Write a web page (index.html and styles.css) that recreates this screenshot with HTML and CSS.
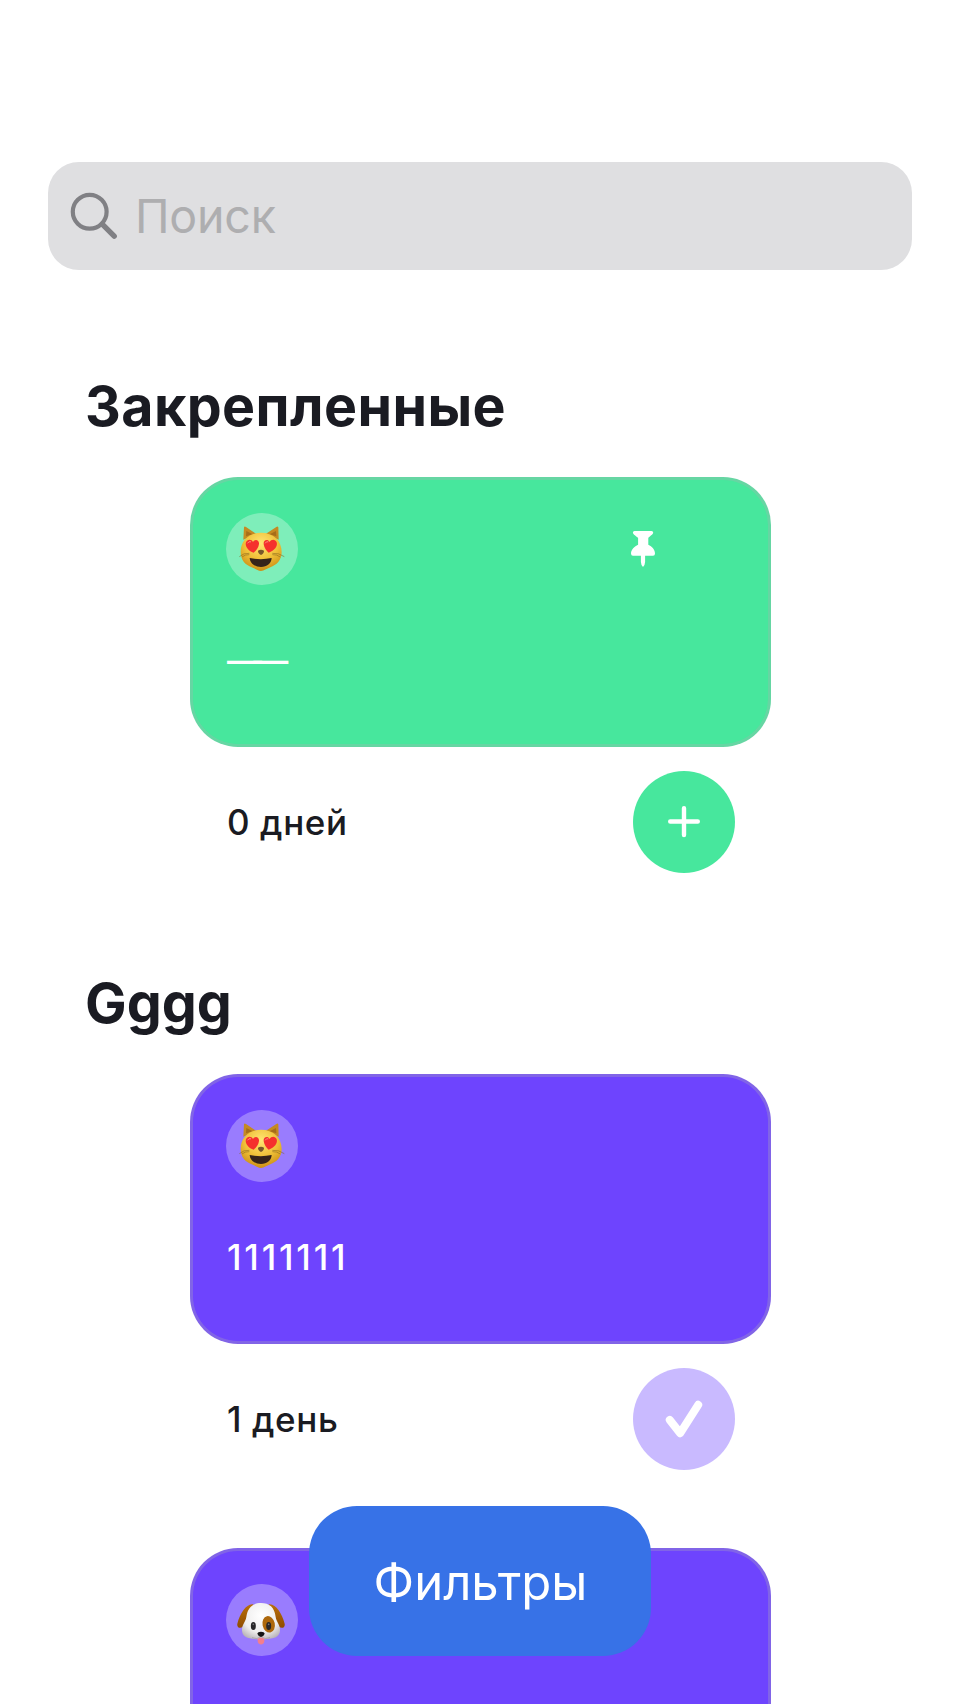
FILE: index.html
```html
<!DOCTYPE html>
<html lang="ru">
<head>
<meta charset="utf-8">
<title>Трекеры</title>
<link rel="stylesheet" href="styles.css">
</head>
<body>
<svg class="defs" aria-hidden="true">
  <defs>
    <radialGradient id="fur" cx="50%" cy="28%" r="75%">
      <stop offset="0" stop-color="#ffe573"/><stop offset=".55" stop-color="#efc038"/><stop offset="1" stop-color="#c98a12"/>
    </radialGradient>
    <radialGradient id="white-fur" cx="50%" cy="35%" r="70%">
      <stop offset="0" stop-color="#ffffff"/><stop offset=".65" stop-color="#efeeee"/><stop offset="1" stop-color="#b9b4b8"/>
    </radialGradient>
    <linearGradient id="ear" x1="0" y1="0" x2="0" y2="1">
      <stop offset="0" stop-color="#b96f0c"/><stop offset="1" stop-color="#8f4c00"/>
    </linearGradient>
    <symbol id="cat" viewBox="0 0 216 216">
      <path d="M52 80 54 43Q55 39 60 42L90 62ZM158 80 157 43Q155 39 151 42L120 62Z" fill="#c58a22"/>
      <path d="M60 70 61 54 80 64ZM151 70 150 54 131 64Z" fill="#a66d1a"/>
      <path d="M105 59C141 59 167 82 167 117C167 142 151 156 133 163C121 167 115 174 105 174C95 174 89 167 77 163C59 156 44 142 44 117C44 82 69 59 105 59Z" fill="url(#fur)"/>
      <path d="M83 119C66 114 56 99 60 88C64 77 77 78 81 87C88 76 100 82 99 93C98 104 90 113 83 119Z" fill="#f5302d"/>
      <path d="M128 119C145 114 156 99 152 88C148 77 135 78 131 87C124 76 112 82 113 93C114 104 121 113 128 119Z" fill="#f5302d"/>
      <path d="M65 90Q68 84 74 86M118 90Q121 84 126 86" fill="none" stroke="#ff8a80" stroke-width="3" stroke-linecap="round"/>
      <path d="M96 113Q105 107 114 113Q114 122 105 126Q96 122 96 113Z" fill="#77572b"/>
      <path d="M71 135Q105 142 137 135C136 151 123 162 105 162C87 162 72 151 71 135Z" fill="#35241a"/>
      <path d="M70 121Q53 119 40 131M70 125Q57 124 48 132M139 121Q158 119 175 131M139 125Q153 124 163 132" fill="none" stroke="#80611f" stroke-width="1.6"/>
    </symbol>
    <symbol id="dog" viewBox="0 0 216 216">
      <path d="M82 61C62 57 42 88 34 119C32 130 41 135 51 128C61 121 76 83 82 61ZM128 61C148 57 168 88 176 119C178 130 169 135 159 128C149 121 134 83 128 61Z" fill="url(#ear)"/>
      <path d="M105 57C130 57 146 70 149 99C151 114 162 120 162 139C162 160 143 166 105 166C67 166 48 160 48 139C48 120 59 114 61 99C65 70 80 57 105 57Z" fill="url(#white-fur)"/>
      <ellipse cx="128" cy="121" rx="18.500" ry="25" transform="rotate(-12 128 121)" fill="#ad680c"/>
      <ellipse cx="82" cy="126" rx="7.500" ry="12" fill="#292729"/>
      <ellipse cx="128" cy="126" rx="7.500" ry="12" fill="#292729"/>
      <circle cx="82" cy="121" r="2.500" fill="#77797c"/><circle cx="128" cy="121" r="2.500" fill="#77797c"/>
      <path d="M78 161Q93 168 105 158Q117 168 132 161" fill="none" stroke="#9d989b" stroke-width="2"/>
      <path d="M95 164Q105 158 115 164V171C115 185 95 185 95 171Z" fill="#f47f8d"/>
      <path d="M94 149Q95 143 105 143Q115 143 116 149Q114 156 105 159Q96 156 94 149Z" fill="#151415"/>
    </symbol>
  </defs>
</svg>

<main class="screen">
  <div class="search">
    <svg class="search-icon" viewBox="0 0 48 48" aria-hidden="true">
      <circle cx="19.700" cy="19.700" r="16.900"/>
      <path d="M32.200 32.200 44.200 44.200"/>
    </svg>
    <span class="search-placeholder">Поиск</span>
  </div>

  <section class="category">
    <h2 class="category-title">Закрепленные</h2>
    <div class="tracker-list">
      <article class="tracker green">
        <div class="card">
          <div class="card-top">
            <span class="emoji"><svg viewBox="0 0 216 216" role="img" aria-label="Кот"><use href="#cat"/></svg></span>
            <svg class="pin" viewBox="0 0 24 36" aria-hidden="true"><path d="M3.500 0H20.500Q22.200 0 22.200 1.600C22.200 3.500 18.500 5.500 17.300 7V13.800C21 15.500 24 18.500 24 22.500Q24 24.800 22 24.800H14.100V31Q14 34 12 36Q10 34 9.900 31V24.800H2Q0 24.800 0 22.500C0 18.500 3.500 15.500 7.100 13.800V7C5.500 5.500 1.900 3.500 1.900 1.600Q1.900 0 3.500 0Z"/></svg>
          </div>
          <p class="card-title dash">——</p>
        </div>
        <div class="tracker-footer">
          <span class="days">0 дней</span>
          <button class="mark" aria-label="Добавить"><svg viewBox="0 0 102 102"><path class="plus" d="M37.200 50.500H64.800M51 37.200V64"/></svg></button>
        </div>
      </article>
    </div>
  </section>

  <section class="category">
    <h2 class="category-title latin">Gggg</h2>
    <div class="tracker-list">
      <article class="tracker violet">
        <div class="card">
          <div class="card-top">
            <span class="emoji"><svg viewBox="0 0 216 216" role="img" aria-label="Кот"><use href="#cat"/></svg></span>
          </div>
          <p class="card-title digits">1111111</p>
        </div>
        <div class="tracker-footer">
          <span class="days">1 день</span>
          <button class="mark done" aria-label="Выполнено"><svg viewBox="0 0 102 102"><path class="check" d="M36.800 52 47.200 65.200 65.200 36.800"/></svg></button>
        </div>
      </article>
      <article class="tracker violet">
        <div class="card">
          <div class="card-top">
            <span class="emoji"><svg viewBox="0 0 216 216" role="img" aria-label="Собака"><use href="#dog"/></svg></span>
          </div>
        </div>
      </article>
    </div>
  </section>

  <button class="filters">Фильтры</button>
</main>
</body>
</html>
```
FILE: styles.css
```css
* { box-sizing: border-box; }

body {
  margin: 0;
  background: #fff;
  color: #1a1b22;
  font-family: Inter, "Liberation Sans", sans-serif;
}

.defs { position: absolute; width: 0; height: 0; }

.screen {
  position: relative;
  height: 1704px;
  padding-top: 162px;
  overflow: hidden;
}

.search {
  display: flex;
  align-items: center;
  height: 108px;
  margin: 0 48px 102px;
  padding-left: 22px;
  border-radius: 31px;
  background: #dfdfe1;
}

.search-icon {
  width: 48px;
  height: 48px;
  fill: none;
  stroke: #808084;
  stroke-width: 4.2;
  stroke-linecap: round;
}

.search-icon path { stroke-width: 5.4; }

.search-placeholder {
  margin-left: 17px;
  color: #aeaeb0;
  font-size: 46.5px;
  letter-spacing: -.2px;
  line-height: 60px;
}

.category { margin-bottom: 96px; }

.category-title {
  margin: 0 0 37px 85px;
  font-size: 55.5px;
  font-weight: 700;
  letter-spacing: .42px;
  line-height: 68px;
}

.category-title.latin { letter-spacing: 0; }

.tracker-list {
  display: flex;
  flex-direction: column;
  gap: 78px;
  width: 581px;
  margin-left: 190px;
}

.green { --accent: #47e79d; }
.violet { --accent: #6e44fe; }

.card {
  height: 270px;
  padding: 33px;
  border: 3px solid rgba(174, 175, 180, .3);
  border-radius: 48px;
  background: var(--accent);
}

.card-top {
  display: flex;
  align-items: center;
  justify-content: space-between;
}

.emoji {
  width: 72px;
  height: 72px;
  border-radius: 50%;
  background: rgba(255, 255, 255, .3);
}

.emoji svg { display: block; width: 72px; height: 72px; }

.pin { width: 24px; height: 36px; margin-right: 80px; fill: #fff; }

.card-title {
  margin: 48px 0 0 1px;
  color: #fff;
  font-size: 35px;
  font-weight: 500;
  line-height: 54px;
}

.card-title.dash { letter-spacing: -8.7px; }
.card-title.digits { letter-spacing: 2.8px; }

.tracker-footer {
  display: flex;
  align-items: center;
  justify-content: space-between;
  margin-top: 24px;
  padding: 0 36px 0 37px;
}

.days {
  font-size: 35px;
  font-weight: 500;
  letter-spacing: .6px;
  line-height: 54px;
}

.mark {
  width: 102px;
  height: 102px;
  padding: 0;
  border: 0;
  border-radius: 50%;
  background: var(--accent);
}

.mark.done { background: #c9baff; }

.mark svg {
  display: block;
  fill: none;
  stroke: #fff;
  stroke-linecap: round;
  stroke-linejoin: round;
}

.plus { stroke-width: 4.4; }
.check { stroke-width: 8; }

.filters {
  position: absolute;
  top: 1506px;
  left: 309px;
  width: 342px;
  height: 150px;
  padding: 4px 0 0 1px;
  border: 0;
  border-radius: 48px;
  background: #3772e7;
  color: #fff;
  font: 400 49px/60px Inter, "Liberation Sans", sans-serif;
}
```
